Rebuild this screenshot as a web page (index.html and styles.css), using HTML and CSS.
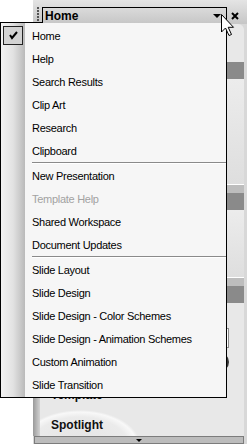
FILE: index.html
```html
<!DOCTYPE html>
<html lang="en">

<head>
    <meta charset="UTF-8">
    <meta name="viewport" content="width=device-width, initial-scale=1.0">
    <title>task pane</title>
    <link rel="stylesheet" href="styles.css">
</head>

<body>
    <!--the pane behind the menu-->
    <div class="pane">
        <div class="pane-head">
            <span class="grip"></span>
            <div class="combo">
                <span class="combo-title">Home</span>
                <span class="combo-arrow"></span>
            </div>
            <svg class="close" width="8" height="8" viewBox="0 0 8 8">
                <path d="M1 1L7 7M7 1L1 7" stroke="#000" stroke-width="2" />
            </svg>
        </div>
        <div class="pane-body">
            <div class="sec-top"></div>
            <div class="band"></div>
            <div class="sec-tall"></div>
            <div class="group">
                <div class="band"></div>
            </div>
            <div class="sec-mid"></div>
            <div class="group">
                <div class="band"></div>
            </div>
            <div class="sec-search">
                <div class="search-box"></div>
                <div class="search-btn"></div>
                <div class="pane-label">Template</div>
            </div>
            <div class="spot">
                <div class="pane-label">Spotlight</div>
            </div>
        </div>
        <div class="hscroll"><span class="hscroll-arrow"></span></div>
    </div>

    <!--the dropdown menu-->
    <div class="menu">
        <div class="item">
            <span class="gutter">
                <span class="check">
                    <svg width="18" height="17" viewBox="0 0 18 17">
                        <path d="M6 8L8 11L13 5" fill="none" stroke="#000" stroke-width="2" />
                    </svg>
                </span>
            </span>
            <span class="label">Home</span>
        </div>
        <div class="item"><span class="gutter"></span><span class="label">Help</span></div>
        <div class="item"><span class="gutter"></span><span class="label">Search Results</span></div>
        <div class="item"><span class="gutter"></span><span class="label">Clip Art</span></div>
        <div class="item"><span class="gutter"></span><span class="label">Research</span></div>
        <div class="item"><span class="gutter"></span><span class="label">Clipboard</span></div>
        <div class="sep"></div>
        <div class="item"><span class="gutter"></span><span class="label">New Presentation</span></div>
        <div class="item disabled"><span class="gutter"></span><span class="label">Template Help</span></div>
        <div class="item"><span class="gutter"></span><span class="label">Shared Workspace</span></div>
        <div class="item"><span class="gutter"></span><span class="label">Document Updates</span></div>
        <div class="sep"></div>
        <div class="item"><span class="gutter"></span><span class="label">Slide Layout</span></div>
        <div class="item"><span class="gutter"></span><span class="label">Slide Design</span></div>
        <div class="item"><span class="gutter"></span><span class="label">Slide Design - Color Schemes</span></div>
        <div class="item"><span class="gutter"></span><span class="label">Slide Design - Animation Schemes</span></div>
        <div class="item"><span class="gutter"></span><span class="label">Custom Animation</span></div>
        <div class="item"><span class="gutter"></span><span class="label">Slide Transition</span></div>
    </div>

    <!--mouse pointer-->
    <svg class="pointer" width="14" height="23" viewBox="0 0 14 23">
        <path d="M0.5 0.5L0.5 18L4.5 14L8 21.5L10.5 20.5L7.2 13.3L12.5 13.3Z" fill="#fff" stroke="#000" stroke-width="1" />
    </svg>
</body>

</html>
```

FILE: styles.css
```css
body {
    margin: 0;
    width: 247px;
    height: 448px;
    position: relative;
    overflow: hidden;
    background: #fff;
    font-family: "Liberation Sans", Arial, sans-serif;
}

/* task pane */
.pane {
    margin-left: 33px;
    width: 214px;
    height: 444px;
    background: #d8d8d8;
    display: flex;
    flex-direction: column;
}

.pane-head {
    height: 24px;
    flex-shrink: 0;
    display: flex;
    align-items: flex-start;
    background: linear-gradient(#e4e4e4, #c6c6c6);
}

.grip {
    width: 2px;
    height: 15px;
    margin: 7px 0 0 4px;
    background: repeating-linear-gradient(#555 0 2px, transparent 2px 3px);
}

.combo {
    margin: 7px 0 0 3px;
    width: 183px;
    height: 16px;
    border: 1px solid #000;
    border-bottom: 0;
    display: flex;
    align-items: center;
}

.combo-title {
    font-weight: bold;
    font-size: 12px;
    padding-left: 2px;
    margin-top: -1px;
}

.combo-arrow {
    margin-left: auto;
    margin-right: 5px;
    margin-top: -1px;
    width: 0;
    height: 0;
    border: 4px solid transparent;
    border-top-color: #000;
    border-bottom: 0;
}

.close {
    margin: 12px 0 0 4px;
}

.pane-body {
    flex: 1;
    margin-right: 3px;
    padding-left: 7px;
    border-top-right-radius: 6px;
    background: linear-gradient(to right, #9a9a9a, #d2d2d2 7px, #e8e8e8 7px);
    display: flex;
    flex-direction: column;
}

.sec-top {
    height: 38px;
}

.band {
    height: 17px;
    background: #8a8a8a;
}

.sec-tall {
    height: 105px;
    background: linear-gradient(#ececec, #dedede);
}

.sec-mid {
    height: 67px;
    background: linear-gradient(#ececec, #dedede);
}

.group {
    border-top: 1px solid #fff;
    padding-top: 8px;
    background: #bdbdbd;
}

.sec-search {
    height: 101px;
    display: flex;
    flex-direction: column;
    align-items: flex-end;
    padding-right: 15px;
}

.search-box {
    margin-top: 25px;
    width: 170px;
    height: 20px;
    box-sizing: border-box;
    background: #fff;
    border: 1px solid #8c8c8c;
}

.search-btn {
    margin-top: 4px;
    width: 20px;
    height: 20px;
    border-radius: 10px;
    background: #333;
}

.pane-label {
    align-self: flex-start;
    margin-left: 11px;
    font-size: 12px;
    font-weight: bold;
    line-height: 14px;
    color: #111;
}

.sec-search .pane-label {
    margin-top: 16px;
}

.spot {
    flex: 1;
    padding-top: 14px;
    background: radial-gradient(ellipse 60px 35px at 40px 41px, #e4e4e4 0, #ebebeb 80%, #f8f8f8 94%, #e8e8e8 100%);
}

.hscroll {
    height: 8px;
    margin: 0 3px 0 1px;
    box-sizing: border-box;
    border: 1px solid #7c7c7c;
    background: #bcbcbc;
    display: flex;
    justify-content: center;
    align-items: center;
}

.hscroll-arrow {
    width: 0;
    height: 0;
    border: 3px solid transparent;
    border-top-color: #000;
    border-bottom: 0;
}

/* dropdown menu */
.menu {
    position: absolute;
    left: 0;
    top: 23px;
    width: 225px;
    padding: 1px 0;
    border: 1px solid #000;
    border-top: 0;
    background: linear-gradient(to right, #f2f2f2, #e2e2e2 12px, #bababa 24px, #f6f6f6 24px);
    font-size: 11px;
    letter-spacing: -0.28px;
}

.menu::before {
    content: "";
    position: absolute;
    left: -1px;
    top: -1px;
    width: 43px;
    height: 1px;
    background: #000;
}

.item {
    height: 23px;
    display: flex;
    align-items: center;
    color: #000;
}

.item.disabled {
    color: #a2a2a2;
}

.gutter {
    width: 31px;
    height: 23px;
    flex-shrink: 0;
}

.check {
    display: block;
    margin: 2px 0 0 2px;
    width: 18px;
    height: 17px;
    border: 1px solid #222;
    background: #d2d2d2;
}

.check svg {
    display: block;
}

.sep {
    height: 2px;
    margin-left: 31px;
    box-sizing: border-box;
    border-top: 1px solid #8a8a8a;
    background: #fff;
}

.pointer {
    position: absolute;
    left: 221px;
    top: 14px;
}
```
